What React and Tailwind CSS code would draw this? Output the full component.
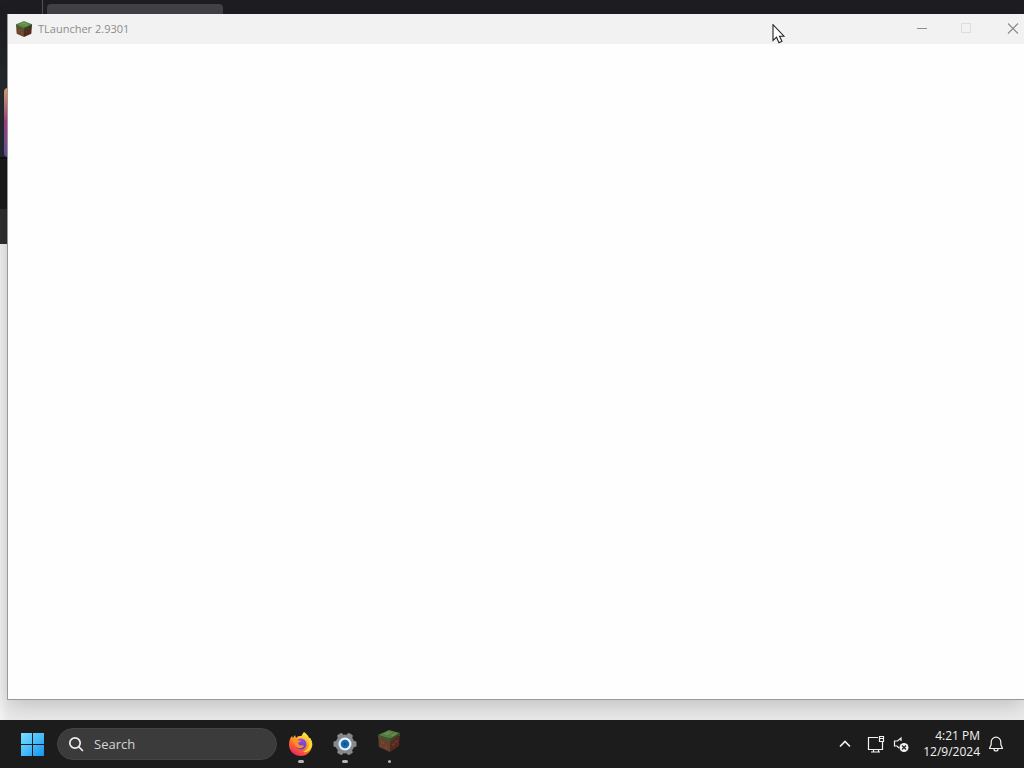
import React from "react";

function GrassBlock({ className }) {
  return (
    <svg viewBox="0 0 24 24" className={className} aria-hidden="true">
      <path d="M12 0 24 5 12 10 0 5Z" fill="#5d8847" />
      <path d="M0 5 12 10V24L1 19Z" fill="#6b452d" />
      <path d="M24 5 12 10V24L23 19Z" fill="#4b2d20" />
      <path d="M0 5 12 10V14L10 12V14L8 12V11L6 10V12L4 10V9L0 8Z" fill="#41662f" />
      <path d="M24 5 12 10V14L14 12V13L16 11V12L18 10V11L20 9V8L24 8Z" fill="#304d26" />
      <path d="M8 4 12 2 15 4 11 5ZM13 6 17 5 18 6 14 8ZM5 5 8 5 10 7Z" fill="#78a15a" />
      <path d="M4 13 6 14V16L4 15ZM8 16 10 17V19L8 18ZM7 13 9 14V15L7 14Z" fill="#8a5b3c" />
      <path d="M14 15 16 14V16L14 17ZM18 12 20 11V13L18 14ZM17 17 19 16V17L17 18Z" fill="#6a3b2b" />
    </svg>
  );
}

function TaskbarBlock() {
  return (
    <svg viewBox="0 0 24 24" className="size-6" aria-hidden="true">
      <path d="M1 6 12 1 23 4 13 10Z" fill="#56793f" />
      <path d="M1 6 13 10V23L2 18Z" fill="#65402d" />
      <path d="M23 4 13 10V23L22 17Z" fill="#54291f" />
      <path d="M1 6 13 10V13L11 11V12L8 10V11L5 9 1 8Z" fill="#3d5a2f" />
      <path d="M23 4 13 10V13L15 11V12L17 9V10L20 7 23 7Z" fill="#34502a" />
      <path d="M6 5 12 2 15 4 10 6ZM14 6 18 4 20 5 15 8Z" fill="#688b50" />
      <path d="M4 12 7 13V15L4 14ZM8 17 10 18V20L8 19Z" fill="#7a4936" />
      <path d="M15 15 18 14V16L15 17ZM18 12 21 11V13L18 14Z" fill="#713528" />
    </svg>
  );
}

function FirefoxIcon() {
  return (
    <svg viewBox="0 0 24 24" className="size-6" aria-hidden="true">
      <defs>
        <linearGradient id="flame" x1="0.8" y1="0" x2="0.25" y2="1">
          <stop offset="0" stopColor="#fff44f" />
          <stop offset="0.35" stopColor="#ffb42a" />
          <stop offset="0.65" stopColor="#ff652f" />
          <stop offset="1" stopColor="#e91e64" />
        </linearGradient>
        <linearGradient id="globe" x1="0" y1="0" x2="0" y2="1">
          <stop offset="0" stopColor="#a04ce0" />
          <stop offset="1" stopColor="#5747bd" />
        </linearGradient>
      </defs>
      <path d="M15 0C18 2 19 4 20 6L21 6C23 9 24 12 23 15C21 21 17 24 12 24C5 24 0 19 0 13C0 9 1 6 3 4L4 6L6 3L7 6C9 4 10 4 12 4C13 4 13 2 15 0Z" fill="url(#flame)" />
      <circle cx="12" cy="12" r="5.5" fill="url(#globe)" />
      <path d="M4 8C6 6 9 8 12 9C12 10 9 10 9 11L10 13C13 14 14 13 15 14C13 17 8 17 6 13Z" fill="#ff8d29" />
      <path d="M15 0C18 3 20 6 20 9C21 15 18 18 14 20C20 21 23 16 23 12C23 9 21 6 21 6L20 6C19 3 16 2 15 0Z" fill="#ffd638" />
    </svg>
  );
}

function SettingsIcon() {
  return (
    <svg viewBox="0 0 24 24" className="size-6" aria-hidden="true">
      <g fill="#85898d">
        <circle cx="12" cy="12" r="9.5" />
        <rect x="9" y="0.5" width="6" height="23" rx="1.5" transform="rotate(30 12 12)" />
        <rect x="9" y="0.5" width="6" height="23" rx="1.5" transform="rotate(90 12 12)" />
        <rect x="9" y="0.5" width="6" height="23" rx="1.5" transform="rotate(150 12 12)" />
      </g>
      <circle cx="12" cy="12" r="6.5" fill="#e7f1fa" />
      <circle cx="12" cy="12" r="4.3" fill="#1769af" />
      <circle cx="12" cy="12" r="1.5" fill="#124c88" />
    </svg>
  );
}

function TaskApp({ label, children, small = false }) {
  return (
    <button aria-label={label} className="relative flex h-12 w-11 shrink-0 items-center justify-center">
      {children}
      <span className={`absolute bottom-[5px] h-[3px] rounded-full bg-[#b5b5b5] ${small ? "w-[3px]" : "w-1.5"}`} />
    </button>
  );
}

function Desktop() {
  return (
    <div aria-hidden="true" className="absolute inset-0 flex flex-col bg-[#e9e9e9]">
      <div className="flex h-[14px] bg-[#1e1d22]">
        <div className="w-[43px] border-r border-[#55545a]" />
        <div className="mt-1 ml-1 w-44 rounded-t bg-[#434247]" />
      </div>
      <div className="h-[74px] w-2 bg-gradient-to-b from-[#1e1d22] to-[#232b30]" />
      <div className="flex h-[69px] w-2 justify-end bg-[#232a2e]">
        <div className="w-1 rounded-l-sm bg-gradient-to-b from-[#eba66d] via-[#ac3c88] to-[#6254ab]" />
      </div>
      <div className="h-[52px] w-2 border-t-2 border-[#111111] bg-[#1b1b1b]" />
      <div className="h-[35px] w-2 bg-[#30312f]" />
      <div className="w-full flex-1 bg-gradient-to-r from-[#f3f3f3] to-[#ebebeb] to-[8px]" />
    </div>
  );
}

function LauncherWindow() {
  return (
    <section aria-label="TLauncher 2.9301" className="relative mt-[14px] mb-5 ml-[7px] flex flex-1 flex-col border-b border-l border-[#999999] bg-[#fefefe] shadow-[0_6px_20px_rgba(0,0,0,0.18)]">
      <header className="flex h-[30px] items-center bg-[#f2f2f2] pl-2 text-[#8c8c8c]">
        <GrassBlock className="size-4" />
        <h1 className="ml-1.5 text-[11px] leading-4">TLauncher 2.9301</h1>
        <div className="ml-auto flex h-full items-center">
          <button aria-label="Minimize" className="flex h-full w-11 items-center justify-center">
            <svg viewBox="0 0 12 12" className="size-3" fill="none" stroke="#909090"><path d="M1 5.5H11" /></svg>
          </button>
          <button aria-label="Maximize" disabled className="flex h-full w-11 items-center justify-center">
            <svg viewBox="0 0 12 12" className="size-3" fill="none" stroke="#dcdcdc"><rect x="1.5" y="0.5" width="9" height="9" /></svg>
          </button>
          <button aria-label="Close" className="flex h-full w-9 items-center justify-end pr-[5px]">
            <svg viewBox="0 0 12 12" className="size-3" fill="none" stroke="#888888" strokeWidth="1.1"><path d="m1 0.5 10 10M11 0.5 1 10.5" /></svg>
          </button>
        </div>
      </header>
    </section>
  );
}

function Taskbar() {
  return (
    <footer className="flex h-12 shrink-0 items-center bg-[#1c1c1c] pl-5 text-[#f2f2f2]">
      <button aria-label="Start" className="flex size-6 shrink-0 items-center justify-center">
        <svg viewBox="0 0 24 24" className="size-6" aria-hidden="true">
          <defs><linearGradient id="start" gradientUnits="userSpaceOnUse" x1="1" y1="1" x2="24" y2="24"><stop stopColor="#79dcff" /><stop offset="0.5" stopColor="#48bdf9" /><stop offset="1" stopColor="#1592ee" /></linearGradient></defs>
          <path d="M1 1H12V12H1ZM13 1H24V12H13ZM1 13H12V24H1ZM13 13H24V24H13Z" fill="url(#start)" />
        </svg>
      </button>
      <label className="mr-0.5 ml-[13px] flex h-8 w-[220px] items-center rounded-full border border-[#444444] bg-[#3b3b3b] pl-2.5">
        <svg viewBox="0 0 16 16" className="size-4 shrink-0" fill="none" stroke="#eeeeee" strokeWidth="1.7" aria-hidden="true"><circle cx="7" cy="7" r="5.2" /><path d="m11 11 3.5 3.5" strokeLinecap="round" /></svg>
        <input type="text" aria-label="Search" placeholder="Search" className="ml-2.5 w-36 bg-transparent text-[13px] leading-5 outline-none placeholder:text-[#d5d5d5]" />
      </label>
      <TaskApp label="Firefox"><FirefoxIcon /></TaskApp>
      <TaskApp label="Settings"><SettingsIcon /></TaskApp>
      <TaskApp label="TLauncher" small><div className="pb-1.5"><TaskbarBlock /></div></TaskApp>
      <div className="ml-auto flex h-full items-center pr-5">
        <button aria-label="Show hidden icons" className="mr-3 flex size-5 items-center justify-center">
          <svg viewBox="0 0 12 12" className="size-3" fill="none" stroke="currentColor" strokeWidth="1.7"><path d="m1 8.5 5-5 5 5" /></svg>
        </button>
        <button aria-label="Network" className="mr-2 flex size-[18px] items-center justify-center">
          <svg viewBox="0 0 18 18" className="size-[18px]" fill="none" stroke="currentColor" strokeWidth="1.2"><path d="M11 2.5H1.5V14.5H15.5V7M6.5 14.5V17M11.5 14.5V17M4 17H13M12.5 1.5H16.5V6.5H12.5ZM12.5 3.5H16.5" /></svg>
        </button>
        <button aria-label="Volume" className="mr-3.5 flex size-4 items-center justify-center">
          <svg viewBox="0 0 16 16" className="size-4" fill="none"><path d="M8 5V2L4.5 5H1.5V10H4L6 12" stroke="#f2f2f2" strokeWidth="1.2" /><circle cx="11" cy="11.5" r="4.5" fill="#f2f2f2" /><path d="m9 9.5 4 4M13 9.5 9 13.5" stroke="#222222" strokeWidth="1.2" /></svg>
        </button>
        <button className="mr-2 flex flex-col items-end text-xs leading-4">
          <time>4:21 PM</time><time>12/9/2024</time>
        </button>
        <button aria-label="Notifications" className="flex size-4 items-center justify-center">
          <svg viewBox="0 0 16 16" className="size-4" fill="none" stroke="currentColor" strokeWidth="1.2"><path d="M3.2 8.5V6a4.8 4.8 0 0 1 9.6 0V8.5L14.5 12.5H1.5ZM6 13a2 2 0 0 0 4 0" strokeLinejoin="round" /></svg>
        </button>
      </div>
    </footer>
  );
}

export default function App() {
  return (
    <div className="flex h-screen flex-col overflow-hidden font-['Open_Sans','Noto_Sans',sans-serif]">
      <main className="relative flex min-h-0 flex-1 flex-col overflow-hidden">
        <Desktop />
        <LauncherWindow />
        <svg viewBox="0 0 13 20" className="absolute top-6 right-[239px] h-5 w-[13px]" aria-hidden="true">
          <path d="M1 0.7V16.5L4.5 13.2 7 18.8 10 17.3 7.5 12.2H12Z" fill="white" stroke="#222222" strokeWidth="1.1" />
        </svg>
      </main>
      <Taskbar />
    </div>
  );
}
